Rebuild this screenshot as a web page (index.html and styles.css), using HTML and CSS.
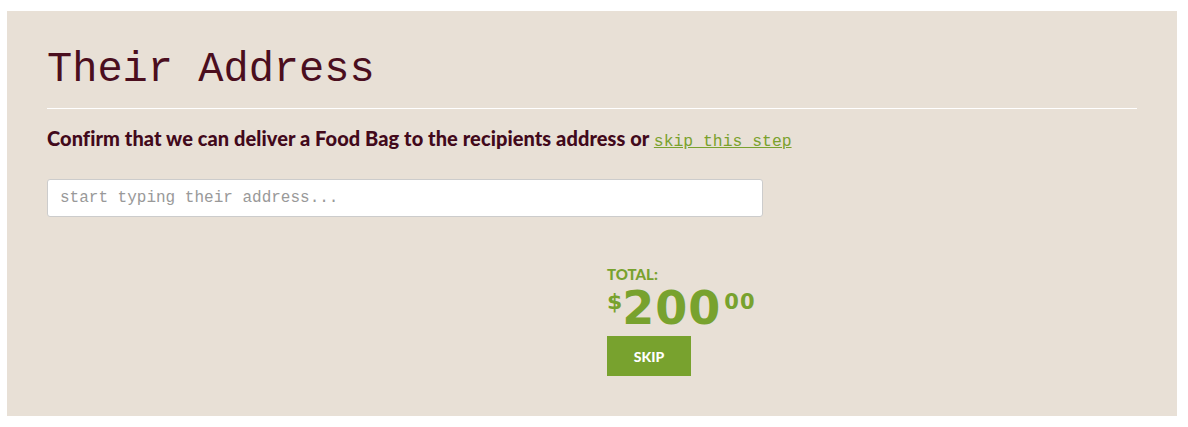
FILE: index.html
```html
<!DOCTYPE html>
<html lang="en">
<head>
  <meta charset="UTF-8">
  <title>Their Address</title>
  <link rel="stylesheet" href="styles.css">
</head>
<body>

  <div class="panel">
    <h1 class="titulo">Their Address</h1>

    <p class="intro">Confirm that we can deliver a Food Bag to the recipients address or <a href="#" class="saltar">skip this step</a></p>

    <input type="text" class="direccion" placeholder="start typing their address...">

    <div class="fila">
      <div class="col"></div>
      <div class="col total">
        <div class="total-label">TOTAL:</div>
        <div class="precio"><sup>$</sup>200<sup class="centavos">00</sup></div>
        <button type="button" class="btn-skip">SKIP</button>
      </div>
    </div>
  </div>

</body>
</html>
```

FILE: styles.css
```css
body { margin: 0; padding: 11px 0 0 7px; background: #fff; }
.panel {
  width: 1170px;
  box-sizing: border-box;
  background: #e8e0d6;
  padding: 35px 40px 40px;
}
.titulo {
  font-family: "Liberation Mono", "Courier New", monospace;
  font-weight: normal;
  font-size: 42px;
  color: #4b0e1e;
  margin: 0;
  padding-bottom: 14px;
  border-bottom: 1px solid #fff;
}
.intro {
  font-family: Lato, "Liberation Sans", sans-serif;
  font-weight: 900;
  font-size: 20px;
  letter-spacing: 0.07px;
  color: #42091b;
  margin: 17px 0 28px;
}
.saltar {
  font-family: "Liberation Mono", "Courier New", monospace;
  font-weight: normal;
  font-size: 16.4px;
  letter-spacing: 0;
  color: #7aa12d;
}
.direccion {
  display: block;
  width: 716px;
  height: 38px;
  box-sizing: border-box;
  border: 1px solid #ccc;
  border-radius: 3px;
  padding: 0 12px;
  font-family: "Liberation Mono", "Courier New", monospace;
  font-size: 16px;
  color: #333;
}
.direccion::placeholder { color: #999; }
.fila { display: grid; grid-template-columns: 1fr 1fr; margin-top: 49px; }
.total { padding-left: 15px; font-family: Lato, "Liberation Sans", sans-serif; color: #78a22e; }
.total-label { font-weight: 900; font-size: 15px; letter-spacing: 0; line-height: 16px; }
.precio {
  font-family: "DejaVu Sans", sans-serif;
  font-weight: bold;
  font-size: 46px;
  line-height: 44px;
  letter-spacing: 1px;
  margin-top: 4px;
  white-space: nowrap;
}
.precio sup { font-size: 22px; vertical-align: top; position: relative; top: -6px; letter-spacing: 0; }
.precio .centavos { font-size: 21px; margin-left: 3px; letter-spacing: 1px; }
.btn-skip {
  display: block;
  margin-top: 6px;
  width: 84px;
  height: 40px;
  border: 0;
  background: #78a22e;
  color: #fff;
  font-family: Lato, "Liberation Sans", sans-serif;
  font-weight: 900;
  font-size: 14px;
}
```
